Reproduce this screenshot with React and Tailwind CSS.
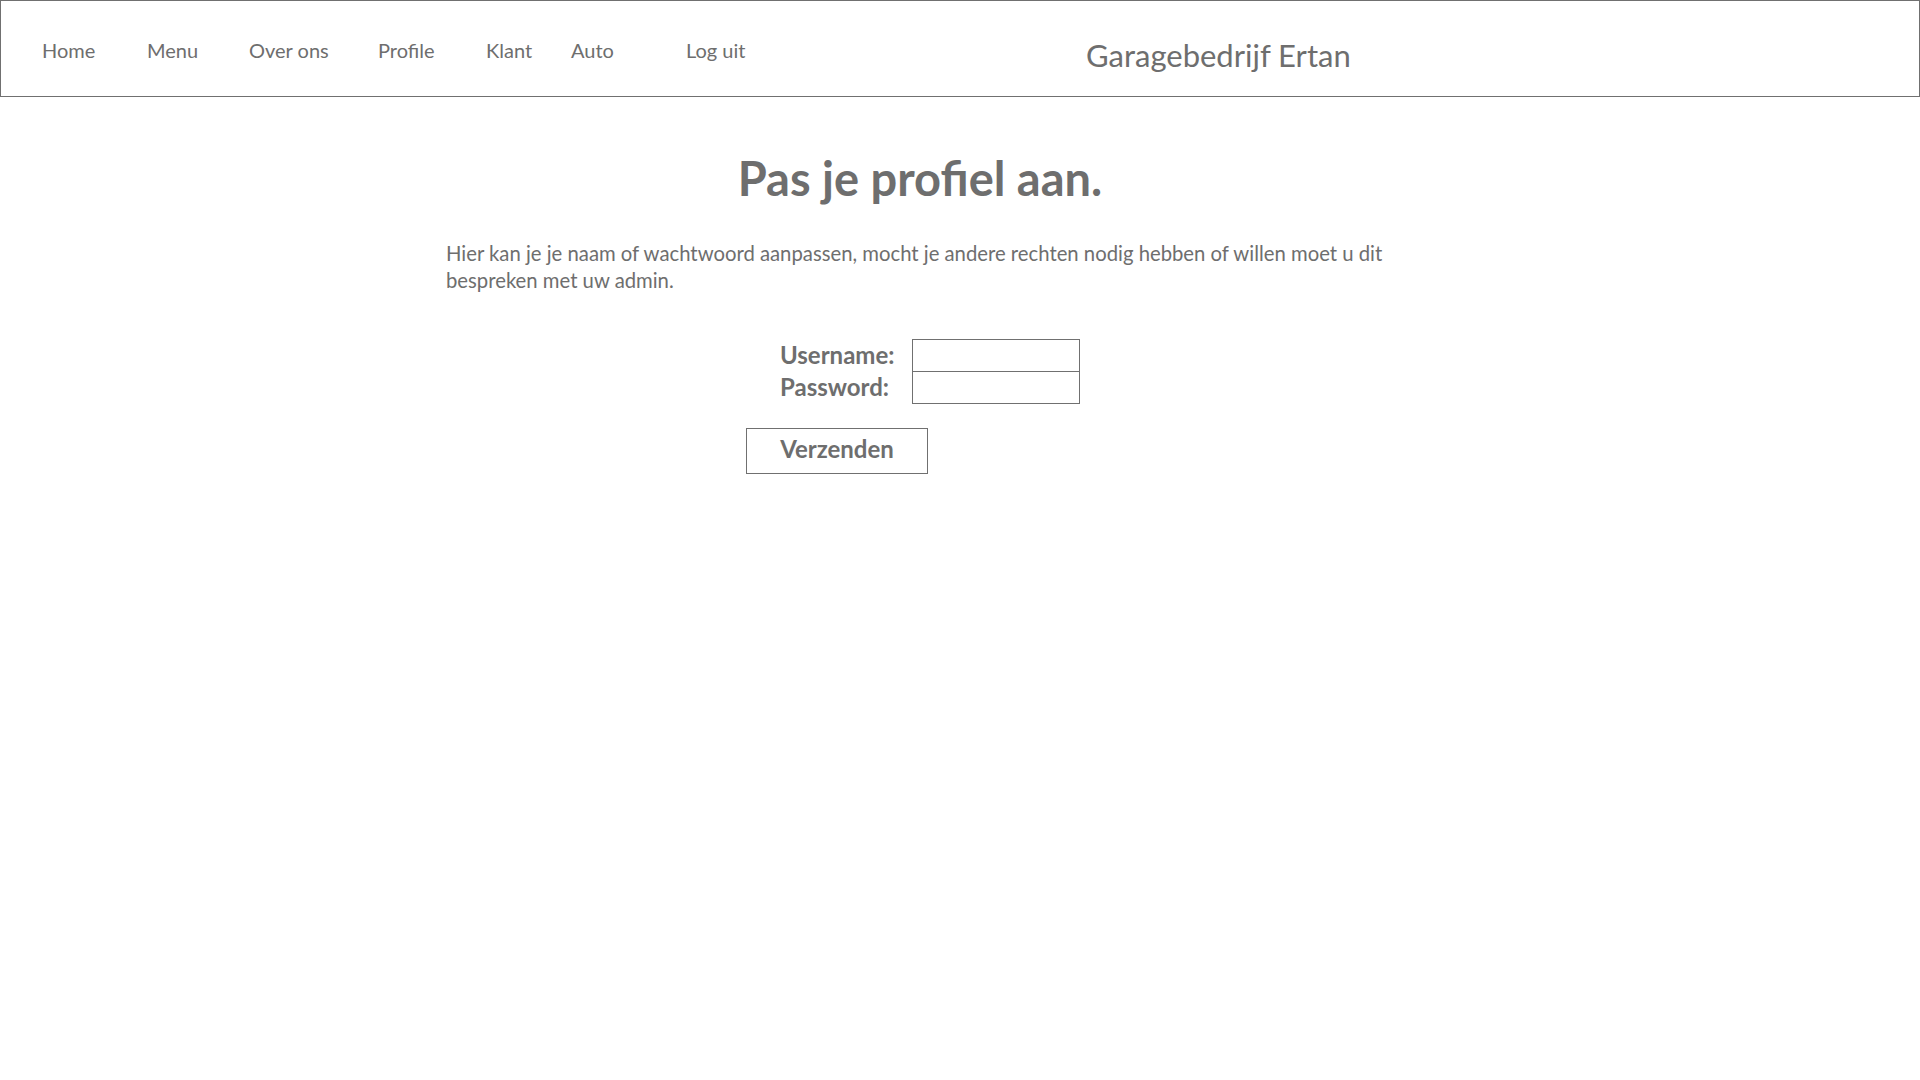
const navItems = [
  { label: 'Home', w: 'w-[105px]' },
  { label: 'Menu', w: 'w-[102px]' },
  { label: 'Over ons', w: 'w-[129px]' },
  { label: 'Profile', w: 'w-[108px]' },
  { label: 'Klant', w: 'w-[85px]' },
  { label: 'Auto', w: 'w-[115px]' },
  { label: 'Log uit', w: 'w-[120px]' },
]

export default function App() {
  return (
    <div className="min-h-[1080px] bg-white text-[#6e6e6e] font-['Lato',sans-serif]">
      {/* Header */}
      <header className="h-[97px] border border-[#707070] flex items-center">
        <nav className="flex items-center pl-[41px] pt-[2px] w-[1085px]">
          {navItems.map(item => (
            <a key={item.label} href="#" className={`${item.w} shrink-0 text-[20px] leading-none`}>
              {item.label}
            </a>
          ))}
        </nav>
        <span className="text-[31px] leading-none pt-[14px]">Garagebedrijf Ertan</span>
      </header>

      {/* Content */}
      <main className="pr-[80px]">
        <div className="w-[948px] mx-auto pt-[51px]">
          <h1 className="text-center font-bold text-[47px] leading-[1.3]">Pas je profiel aan.</h1>

          <p className="mt-[31px] text-[20.3px] leading-[27px]">
            Hier kan je je naam of wachtwoord aanpassen, mocht je andere rechten nodig hebben of willen moet u dit bespreken met uw admin.
          </p>

          <form className="mt-[45px] ml-[300px]" onSubmit={e => e.preventDefault()}>
            <div className="flex flex-col pl-[34px]">
              <label className="flex items-center h-[32px]">
                <span className="w-[132px] font-bold text-[24px]">Username:</span>
                <input type="text" className="w-[168px] h-[33px] border border-[#707070] outline-none" />
              </label>
              <label className="flex items-center h-[32px]">
                <span className="w-[132px] font-bold text-[24px]">Password:</span>
                <input type="password" className="w-[168px] h-[33px] border border-[#707070] outline-none" />
              </label>
            </div>
            <button type="submit" className="mt-[25px] w-[182px] h-[46px] border border-[#707070] font-bold text-[24px] leading-none pb-[4px]">
              Verzenden
            </button>
          </form>
        </div>
      </main>
    </div>
  )
}
